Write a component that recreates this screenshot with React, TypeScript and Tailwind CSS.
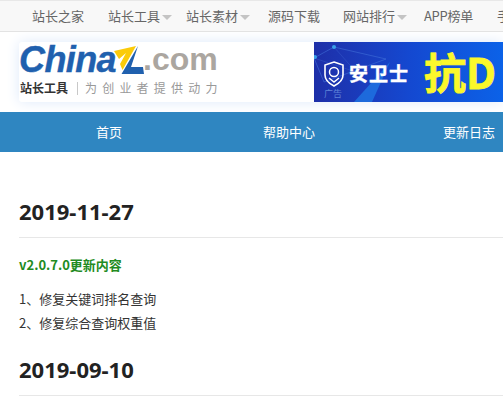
const cjk = "font-['Noto_Sans_CJK_SC','Liberation_Sans',sans-serif]";

function Caret() {
  return <span className="ml-0.5 mt-0.5 h-0 w-0 border-x-[5px] border-t-[5px] border-x-transparent border-t-[#c4c4c4]" />;
}

function TopItem({ label, caret, className }: { label: string; caret?: boolean; className: string }) {
  return (
    <div className={`flex shrink-0 items-center ${className}`}>
      <span className="whitespace-nowrap">{label}</span>
      {caret && <Caret />}
    </div>
  );
}

function Ad() {
  return (
    <div className="relative ml-[95px] h-[60px] w-[189px] shrink-0 overflow-hidden bg-gradient-to-r from-[#1d2fa8] via-[#1448d0] to-[#0b62e8]">
      <svg className="absolute inset-0" width="189" height="60" viewBox="0 0 189 60" fill="none">
        <path d="M0 16 L20 5 L72 17 L10 40 Z" stroke="#3f6fd8" strokeWidth="0.6" />
        <path d="M20 5 L42 30 M0 16 L42 30" stroke="#3458c8" strokeWidth="0.5" />
        <circle cx="20" cy="5" r="2" fill="#3aa0e8" />
        <circle cx="1" cy="15" r="2" fill="#3aa0e8" />
        <path d="M40 60 L76 20 L58 60 Z" fill="#1f7ae6" opacity="0.75" />
      </svg>
      <svg className="absolute left-[9px] top-[19px]" width="22" height="26" viewBox="0 0 22 26" fill="none" stroke="#fff">
        <path d="M11 1 L20 4 V14 C20 20 15 23 11 25 C7 23 2 20 2 14 V4 Z" strokeWidth="1.6" />
        <circle cx="11" cy="11" r="4.5" strokeWidth="1.5" />
        <path d="M6 17 L11 21 L16 17" strokeWidth="1.5" />
      </svg>
      <span className={`absolute left-[35px] top-[19px] text-[19px] font-bold leading-[24px] tracking-[1px] text-white [-webkit-text-stroke:0.4px_#fff] ${cjk}`}>安卫士</span>
      <span className={`absolute left-[10px] top-[46px] text-[9px] leading-[12px] text-[#5f83d8] ${cjk}`}>广告</span>
      <span className={`absolute left-[110px] top-[5px] whitespace-nowrap text-[42px] font-bold leading-[48px] text-[#fbf82b] [-webkit-text-stroke:0.8px_#fbf82b] ${cjk}`}>抗D</span>
    </div>
  );
}

function Logo() {
  return (
    <div className="w-[200px] shrink-0 pt-[2px]">
      <div className="flex h-[31px] items-end">
        <span className="font-['Liberation_Sans',sans-serif] text-[36px] font-bold italic leading-[31px] tracking-[-0.6px] text-[#2060ae] [-webkit-text-stroke:0.4px_#2060ae]">China</span>
        <svg className="-ml-[3px] shrink-0" width="32" height="30" viewBox="0 0 32 30">
          <path d="M1 6 L23 1 L9.5 25 L7 19 L13 8 L6 14 Z" fill="#fbcb0a" />
          <path d="M25 1 L8.5 29 L31 29 L30 22 L18 22 Z" fill="#2060ae" />
        </svg>
        <span className="-ml-[2px] font-['Liberation_Sans',sans-serif] text-[32px] font-bold leading-[31px] text-[#aba6a0]">.com</span>
      </div>
      <div className={`mt-[4px] flex items-center text-[12px] leading-[18px] ${cjk}`}>
        <span className="ml-[1px] whitespace-nowrap font-bold text-[#333]">站长工具</span>
        <span className="ml-[9px] mr-[7px] h-[13px] w-px shrink-0 bg-[#c8c8c8]" />
        <span className="whitespace-nowrap text-[12px] tracking-[5.2px] text-[#999]">为创业者提供动力</span>
      </div>
    </div>
  );
}

export default function App() {
  return (
    <div className={`h-[406px] w-[503px] overflow-hidden bg-white text-[13px] ${cjk}`}>
      <div className="flex h-[32px] items-center border-y border-t-[#e8e8e8] border-b-[#e3e3e3] bg-[#f8f8f8] pl-[32px] text-[#666]">
        <TopItem label="站长之家" className="w-[76px]" />
        <TopItem label="站长工具" caret className="w-[78px]" />
        <TopItem label="站长素材" caret className="w-[82px]" />
        <TopItem label="源码下载" className="w-[75px]" />
        <TopItem label="网站排行" caret className="w-[81px]" />
        <TopItem label="APP榜单" className="w-[73px] tracking-[-0.3px]" />
        <TopItem label="手机版" className="w-[60px]" />
      </div>

      <div className="flex h-[80px] items-center overflow-hidden bg-white pl-[19px]">
        <div className="flex h-[60px] w-[484px] shrink-0 rounded-[3px] bg-white shadow-[0_0_14px_#dde9fa]">
          <Logo />
          <Ad />
        </div>
      </div>

      <div className="flex h-[40px] items-center bg-[#2f86c1] pl-[19px] text-white">
        {["首页", "帮助中心", "更新日志"].map((t) => (
          <div key={t} className="w-[180px] shrink-0 text-center">{t}</div>
        ))}
      </div>

      <div className="pl-[19px] text-[#333]">
        <h2 className="mt-[42px] border-b border-[#e7e7e7] pb-[9px] font-['Noto_Sans',sans-serif] text-[22px] font-bold leading-[34px] text-[#222]">2019-11-27</h2>
        <p className="mt-[15px] text-[13px] font-bold leading-[24px] text-[#228b22]">v2.0.7.0更新内容</p>
        <p className="mt-[10px] leading-[24px]">1、修复关键词排名查询</p>
        <p className="leading-[24px]">2、修复综合查询权重值</p>
        <h2 className="mt-[17px] border-b border-[#e7e7e7] pb-[9px] font-['Noto_Sans',sans-serif] text-[22px] font-bold leading-[34px] text-[#222]">2019-09-10</h2>
      </div>
    </div>
  );
}
